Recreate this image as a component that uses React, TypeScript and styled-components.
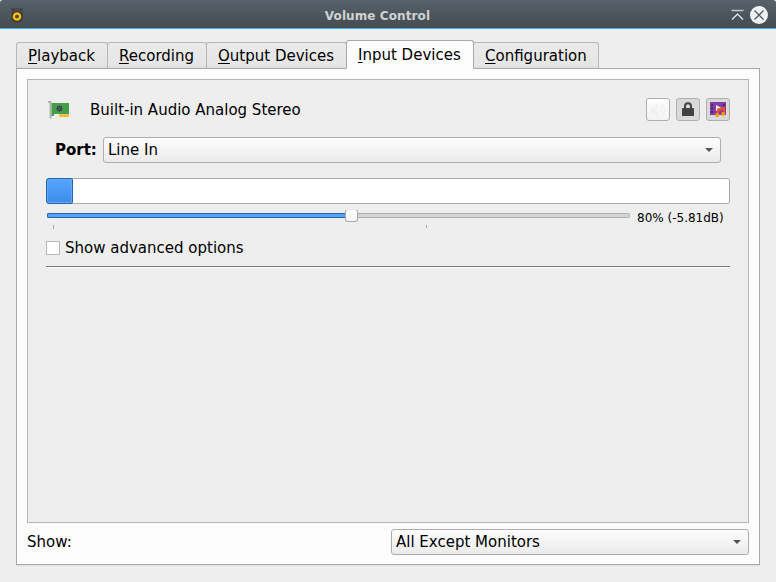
import React from "react";
import styled, { createGlobalStyle } from "styled-components";

const GlobalStyle = createGlobalStyle`
  * { box-sizing: border-box; }
  html, body, #root { margin: 0; height: 100%; }
  body { background: #eeeeee; overflow: hidden; }
`;

const Window = styled.div`
  display: flex;
  flex-direction: column;
  width: 776px;
  height: 582px;
  background: #eeeeee;
  color: #000;
  font: 15px/20px "DejaVu Sans", sans-serif;
  white-space: nowrap;
  cursor: default;
`;

const TitleBar = styled.header`
  display: grid;
  grid-template-columns: 38px 1fr 60px;
  align-items: center;
  flex: none;
  height: 29px;
  padding: 0 8px 0 9px;
  border-bottom: 1px solid #3daee9;
  border-radius: 3px 3px 0 0;
  background: linear-gradient(#566169, #454c52);
`;

const Title = styled.h1`
  margin: 0;
  padding-top: 3px;
  color: #cfd2d3;
  font-size: 12px;
  font-weight: bold;
  letter-spacing: 0.1px;
  line-height: 16px;
  text-align: center;
`;

const WindowButtons = styled.div`
  display: flex;
  justify-content: flex-end;
  align-items: center;
  gap: 6px;
  padding-top: 1px;
`;

const Glyph = styled.svg`
  display: block;
  flex: none;
`;

const Body = styled.main`
  display: flex;
  flex-direction: column;
  flex: 1;
  padding: 11px 16px 17px;
`;

const Tabs = styled.nav`
  display: flex;
  align-items: flex-end;
  height: 29px;
  margin-bottom: -1px;
`;

const Tab = styled.div<{ $width: number; $active?: boolean }>`
  z-index: ${(p) => (p.$active ? 1 : 0)};
  width: ${(p) => p.$width}px;
  height: ${(p) => (p.$active ? 29 : 27)}px;
  margin-right: -1px;
  padding: ${(p) => (p.$active ? 4 : 3)}px 0 0 11px;
  border: 1px solid ${(p) => (p.$active ? "#a9a9a9" : "#b6b6b6")};
  border-bottom-color: ${(p) => (p.$active ? "#fcfcfc" : "#a8a8a8")};
  border-radius: 3px 3px 0 0;
  background: ${(p) => (p.$active ? "#fcfcfc" : "linear-gradient(#eaeaea, #e6e6e6 85%, #dedede)")};
`;

const Mnemonic = styled.span`
  text-decoration: underline;
  text-decoration-thickness: 1px;
  text-underline-offset: 2px;
  text-decoration-skip-ink: none;
`;

const Pane = styled.section`
  display: flex;
  flex-direction: column;
  flex: 1;
  padding: 10px 10px 9px;
  border: 1px solid #a8a8a8;
  background: #fcfcfc;
  box-shadow: 0 1px 0 #dfdfdf;
`;

const DeviceList = styled.div`
  flex: 1;
  padding: 18px;
  border: 1px solid #b5b5b5;
  background: #eeeeee;
`;

const DeviceHeader = styled.div`
  display: flex;
  align-items: center;
  height: 23px;
`;

const DeviceName = styled.span`
  flex: 1;
  padding-left: 18px;
`;

const DeviceButtons = styled.div`
  display: flex;
  gap: 6px;
`;

const ToolButton = styled.button<{ $pressed?: boolean }>`
  display: flex;
  align-items: center;
  justify-content: center;
  width: 24px;
  height: 23px;
  padding: 0;
  border: 1px solid #aeaeae;
  border-radius: 3px;
  background: ${(p) => (p.$pressed ? "#d9d9d9" : "linear-gradient(#fefefe, #f3f3f3)")};
`;

const PortRow = styled.div`
  display: flex;
  align-items: center;
  margin-top: 16px;
  padding: 0 9px;
`;

const PortLabel = styled.label`
  width: 48px;
  font-weight: bold;
`;

const Combo = styled.div<{ $width: number }>`
  display: flex;
  align-items: center;
  justify-content: space-between;
  width: ${(p) => p.$width}px;
  height: 26px;
  padding: 0 7px 0 4px;
  border: 1px solid #adadad;
  border-radius: 3px;
  background: linear-gradient(#fdfdfd, #ebebeb);
`;

const LevelMeter = styled.div`
  height: 26px;
  margin-top: 15px;
  border: 1px solid #aaa;
  border-radius: 3px;
  background: #fff;
`;

const LevelFill = styled.div`
  width: 27px;
  height: 26px;
  margin: -1px;
  border: 1px solid #2565ab;
  border-radius: 3px 2px 2px 3px;
  background: linear-gradient(#55a4ff, #3e8ee9);
  box-shadow: inset 0 0 0 1px #63a9f6;
`;

const VolumeRow = styled.div`
  display: flex;
  height: 26px;
  margin-top: 5px;
  padding-left: 1px;
`;

const Slider = styled.div`
  width: 583px;
`;

const Track = styled.div`
  display: flex;
  align-items: center;
  height: 13px;
`;

const TrackFilled = styled.div`
  width: 299px;
  height: 5px;
  border: 1px solid #2863a8;
  border-right: 0;
  border-radius: 2px 0 0 2px;
  background: #56a5fb;
`;

const Handle = styled.div`
  width: 13px;
  height: 13px;
  margin-left: -1px;
  border: 1px solid #aaa;
  border-top-color: #e6e6e6;
  border-radius: 3px;
  background: linear-gradient(#fff, #f5f5f5);
`;

const TrackEmpty = styled.div`
  flex: 1;
  height: 5px;
  border: 1px solid #b0b0b0;
  border-left: 0;
  border-radius: 0 2px 2px 0;
  background: #d4d4d4;
`;

const Ticks = styled.div`
  display: flex;
  gap: 372px;
  padding: 3px 0 0 6px;
`;

const Tick = styled.i<{ $height: number }>`
  width: 1px;
  height: ${(p) => p.$height}px;
  background: #aaa;
`;

const VolumeText = styled.span`
  padding: 1px 0 0 7px;
  font-size: 12px;
  line-height: 17px;
`;

const CheckRow = styled.div`
  display: flex;
  align-items: center;
  gap: 5px;
  height: 20px;
  margin-top: 3px;
`;

const CheckBox = styled.span`
  width: 14px;
  height: 14px;
  border: 1px solid #b9b9b9;
  background: #fff;
`;

const Separator = styled.div`
  height: 2px;
  margin-top: 8px;
  border-top: 1px solid #777;
  border-bottom: 1px solid #fff;
`;

const Footer = styled.footer`
  display: flex;
  align-items: center;
  justify-content: space-between;
  margin-top: 6px;
`;

function ComboArrow() {
  return (
    <Glyph width="8" height="4" viewBox="0 0 8 4">
      <path d="M0 0h8L4 4z" fill="#565656" />
    </Glyph>
  );
}

function SpeakerIcon() {
  return (
    <Glyph width="16" height="20" viewBox="0 -4 16 20">
      <path d="M2 0h12v15H2z" fill="#4b4b4b" />
      <path d="M4 1h1v1H4zM11 1h1v1h-1z" fill="#222" />
      <circle cx="8" cy="8.5" r="5.7" fill="#33363a" />
      <circle cx="8" cy="8.5" r="3.1" fill="none" stroke="#fdbc08" strokeWidth="2.5" />
      <circle cx="8" cy="8.5" r="1.4" fill="#4c4c4c" />
    </Glyph>
  );
}

function SoundCardIcon() {
  return (
    <Glyph width="26" height="22" viewBox="0 0 26 22">
      <path d="M2 2h3.5v17.5h-2V4H2z" fill="#b3b3b3" />
      <path d="M5.5 4H23v13h-9v-2H8v2H5.5z" fill="#43a047" />
      <path d="M13 15h10v3H13z" fill="#ffc145" />
      <path d="M15.5 16v2M18.5 16v2M21.5 16v2" stroke="#e0a136" strokeWidth=".7" />
      <circle cx="13.5" cy="9.5" r="2.6" fill="#424a50" />
      <path d="M13.5 6v7M10 9.5h7M11 7l5 5M16 7l-5 5" stroke="#424a50" strokeWidth="1" />
      <path d="M13 9h1v1h-1z" fill="#66706f" />
    </Glyph>
  );
}

function MuteIcon() {
  return (
    <Glyph width="16" height="16" viewBox="0 0 16 16">
      <path d="M1 5h3l4-4v14l-4-4H1z" fill="#f0f0f0" />
      <path d="M10 4q4 4 0 8M10 1q8 6 2 13" fill="none" stroke="#f2f2f2" strokeWidth="1.5" />
      <path d="M1 1l14 14" stroke="#fafafa" strokeWidth="2" />
      <path d="M2 1l13 13" stroke="#efefef" />
    </Glyph>
  );
}

function LockIcon() {
  return (
    <Glyph width="14" height="15" viewBox="0 0 14 15">
      <path d="M4 6.5V4.2a3 3 0 0 1 6 0v2.3" fill="none" stroke="#424242" strokeWidth="2" />
      <rect x="1" y="6" width="12" height="8" rx=".6" fill="#424242" />
    </Glyph>
  );
}

function MediaIcon() {
  return (
    <Glyph width="16" height="17" viewBox="0 0 16 17">
      <path d="M0 1h16v13H0z" fill="#803ca2" />
      <path d="M1 3h2v2H1zM1 6.5h2v2H1zM1 10h2v2H1zM13 3h2v2h-2z" fill="#4e2465" />
      <path d="M6 4l5.5 3L6 10z" fill="#fff" />
      <path d="M7 7.5l8-1.5v7h-2V9l-4 .8V14H7z" fill="#f4511e" />
      <circle cx="7.1" cy="14" r="2" fill="#ff9800" />
      <circle cx="13.1" cy="13" r="2" fill="#ff9800" />
    </Glyph>
  );
}

const tabs = [
  { label: "Playback", width: 92 },
  { label: "Recording", width: 100 },
  { label: "Output Devices", width: 141 },
  { label: "Input Devices", width: 128, active: true },
  { label: "Configuration", width: 126 },
];

export default function App() {
  return (
    <>
      <GlobalStyle />
      <Window>
        <TitleBar>
          <SpeakerIcon />
          <Title>Volume Control</Title>
          <WindowButtons>
            <Glyph width="13" height="12" viewBox="0 0 13 12">
              <path d="M.5 1.5h12" stroke="#c4c7c9" strokeWidth="1.5" />
              <path d="M1 10.5l5.5-5.5 5.5 5.5" fill="none" stroke="#eff0f1" strokeWidth="1.2" />
            </Glyph>
            <Glyph width="18" height="18" viewBox="0 0 18 18">
              <circle cx="9" cy="9" r="9" fill="#eff0f1" />
              <path d="M4.5 4.5l9 9M13.5 4.5l-9 9" stroke="#4b535a" strokeWidth="1.2" />
            </Glyph>
          </WindowButtons>
        </TitleBar>
        <Body>
          <Tabs>
            {tabs.map((t) => (
              <Tab key={t.label} $width={t.width} $active={t.active}>
                <Mnemonic>{t.label[0]}</Mnemonic>
                {t.label.slice(1)}
              </Tab>
            ))}
          </Tabs>
          <Pane>
            <DeviceList>
              <DeviceHeader>
                <SoundCardIcon />
                <DeviceName>Built-in Audio Analog Stereo</DeviceName>
                <DeviceButtons>
                  <ToolButton><MuteIcon /></ToolButton>
                  <ToolButton $pressed><LockIcon /></ToolButton>
                  <ToolButton $pressed><MediaIcon /></ToolButton>
                </DeviceButtons>
              </DeviceHeader>
              <PortRow>
                <PortLabel>Port:</PortLabel>
                <Combo $width={618}>Line In<ComboArrow /></Combo>
              </PortRow>
              <LevelMeter><LevelFill /></LevelMeter>
              <VolumeRow>
                <Slider>
                  <Track>
                    <TrackFilled />
                    <Handle />
                    <TrackEmpty />
                  </Track>
                  <Ticks>
                    <Tick $height={4} />
                    <Tick $height={3} />
                  </Ticks>
                </Slider>
                <VolumeText>80% (-5.81dB)</VolumeText>
              </VolumeRow>
              <CheckRow>
                <CheckBox />
                <span>Show advanced options</span>
              </CheckRow>
              <Separator />
            </DeviceList>
            <Footer>
              <span>Show:</span>
              <Combo $width={358}>All Except Monitors<ComboArrow /></Combo>
            </Footer>
          </Pane>
        </Body>
      </Window>
    </>
  );
}
